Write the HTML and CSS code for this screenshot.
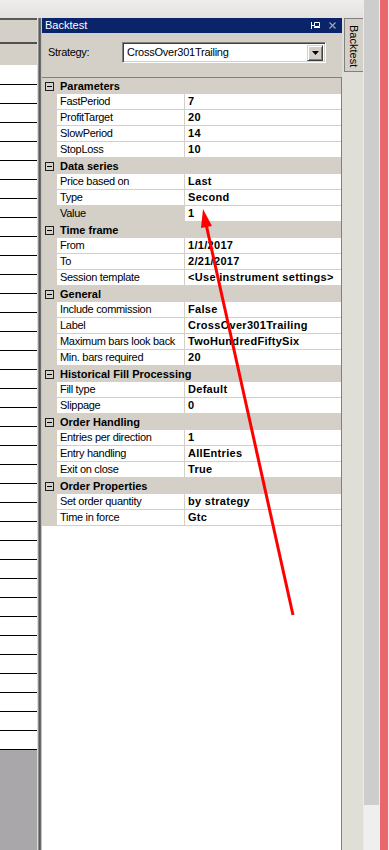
FILE: index.html
```html
<!DOCTYPE html>
<html>
<head>
<meta charset="utf-8">
<title>Backtest</title>
<link rel="stylesheet" href="styles.css">
</head>
<body>
<div class="screen">
  <div class="main">
    <div class="topband"></div>
    <div class="content">
      <div class="left">
        <div class="lhead1"></div>
        <div class="lhead2"></div>
        <div class="lrows">
          <div class="lrow"></div><div class="lrow"></div><div class="lrow"></div><div class="lrow"></div>
          <div class="lrow"></div><div class="lrow"></div><div class="lrow"></div><div class="lrow"></div>
          <div class="lrow"></div><div class="lrow"></div><div class="lrow"></div><div class="lrow"></div>
          <div class="lrow"></div><div class="lrow"></div><div class="lrow"></div><div class="lrow"></div>
          <div class="lrow"></div><div class="lrow"></div><div class="lrow"></div><div class="lrow"></div>
          <div class="lrow"></div><div class="lrow"></div><div class="lrow"></div><div class="lrow"></div>
          <div class="lrow"></div><div class="lrow"></div><div class="lrow"></div><div class="lrow"></div>
          <div class="lrow"></div><div class="lrow"></div><div class="lrow"></div><div class="lrow"></div>
          <div class="lrow"></div><div class="lrow"></div><div class="lrow"></div><div class="lrow"></div>
        </div>
        <div class="lfill"></div>
      </div>
      <div class="splitter"></div>
      <div class="panel">
        <div class="titlebar">
          <span class="title">Backtest</span>
          <svg class="pin" width="9" height="7" viewBox="0 0 9 7"><path d="M0.5 0V7M0 3.5H3M3.5 0.5H8.5V4.5H3.5Z M3 5.5H9" stroke="#fff" stroke-width="1" fill="none"/></svg>
          <svg class="close" width="7" height="7" viewBox="0 0 7 7"><path d="M0.5 0.5L6.5 6.5M6.5 0.5L0.5 6.5" stroke="#9ea4bd" stroke-width="1.2" fill="none"/></svg>
        </div>
        <div class="toolbar">
          <span class="lbl">Strategy:</span>
          <div class="combo">
            <span class="combo-text">CrossOver301Trailing</span>
            <div class="dd"><svg width="7" height="4" viewBox="0 0 7 4"><polygon points="0,0 7,0 3.5,4" fill="#000"/></svg></div>
          </div>
        </div>
        <div class="grid">
          <div class="cat"><div class="gut"><span class="box"></span></div><span class="ctitle">Parameters</span></div>
          <div class="prop"><div class="gut"></div><div class="name">FastPeriod</div><div class="val">7</div></div>
          <div class="prop"><div class="gut"></div><div class="name">ProfitTarget</div><div class="val">20</div></div>
          <div class="prop"><div class="gut"></div><div class="name">SlowPeriod</div><div class="val">14</div></div>
          <div class="prop"><div class="gut"></div><div class="name">StopLoss</div><div class="val">10</div></div>
          <div class="cat"><div class="gut"><span class="box"></span></div><span class="ctitle">Data series</span></div>
          <div class="prop"><div class="gut"></div><div class="name">Price based on</div><div class="val">Last</div></div>
          <div class="prop"><div class="gut"></div><div class="name">Type</div><div class="val">Second</div></div>
          <div class="prop sel"><div class="gut"></div><div class="name">Value</div><div class="val">1</div></div>
          <div class="cat"><div class="gut"><span class="box"></span></div><span class="ctitle">Time frame</span></div>
          <div class="prop"><div class="gut"></div><div class="name">From</div><div class="val">1/1/2017</div></div>
          <div class="prop"><div class="gut"></div><div class="name">To</div><div class="val">2/21/2017</div></div>
          <div class="prop"><div class="gut"></div><div class="name">Session template</div><div class="val">&lt;Use instrument settings&gt;</div></div>
          <div class="cat"><div class="gut"><span class="box"></span></div><span class="ctitle">General</span></div>
          <div class="prop"><div class="gut"></div><div class="name">Include commission</div><div class="val">False</div></div>
          <div class="prop"><div class="gut"></div><div class="name">Label</div><div class="val">CrossOver301Trailing</div></div>
          <div class="prop"><div class="gut"></div><div class="name">Maximum bars look back</div><div class="val">TwoHundredFiftySix</div></div>
          <div class="prop"><div class="gut"></div><div class="name">Min. bars required</div><div class="val">20</div></div>
          <div class="cat"><div class="gut"><span class="box"></span></div><span class="ctitle">Historical Fill Processing</span></div>
          <div class="prop"><div class="gut"></div><div class="name">Fill type</div><div class="val">Default</div></div>
          <div class="prop"><div class="gut"></div><div class="name">Slippage</div><div class="val">0</div></div>
          <div class="cat"><div class="gut"><span class="box"></span></div><span class="ctitle">Order Handling</span></div>
          <div class="prop"><div class="gut"></div><div class="name">Entries per direction</div><div class="val">1</div></div>
          <div class="prop"><div class="gut"></div><div class="name">Entry handling</div><div class="val">AllEntries</div></div>
          <div class="prop"><div class="gut"></div><div class="name">Exit on close</div><div class="val">True</div></div>
          <div class="cat"><div class="gut"><span class="box"></span></div><span class="ctitle">Order Properties</span></div>
          <div class="prop"><div class="gut"></div><div class="name">Set order quantity</div><div class="val">by strategy</div></div>
          <div class="prop"><div class="gut"></div><div class="name">Time in force</div><div class="val">Gtc</div></div>
        </div>
      </div>
      <div class="dock"><div class="tab">Backtest</div></div>
    </div>
  </div>
  <div class="vscroll"><div class="thumb"></div><div class="track"></div></div>
  <div class="redbar"></div>
</div>
<svg class="arrow" width="389" height="850" viewBox="0 0 389 850">
  <line x1="293" y1="615" x2="206" y2="224" stroke="#ff0000" stroke-width="3"/>
  <polygon points="203,209 212,226 201,228" fill="#ff0000"/>
</svg>
</body>
</html>
```

FILE: styles.css
```css
html, body {
  margin: 0;
  padding: 0;
  width: 389px;
  height: 850px;
  overflow: hidden;
  font-family: "Liberation Sans", Arial, sans-serif;
  font-size: 11px;
  color: #000;
}

.screen {
  display: flex;
  width: 389px;
  height: 850px;
}

.main {
  width: 363px;
  display: flex;
  flex-direction: column;
}

.topband {
  height: 18px;
  background: linear-gradient(#efeded, #e4e0e0);
}

.content {
  flex: 1;
  display: flex;
  min-height: 0;
}

/* left panel */
.left {
  width: 37px;
  display: flex;
  flex-direction: column;
  background: #d4d0c8;
}
.lhead1 {
  height: 22px;
  border-top: 2px solid #5a5a5a;
}
.lhead2 {
  height: 21px;
  border-top: 2px solid #505050;
}
.lrows {
  background: #fff;
  padding-top: 1px;
}
.lrow {
  height: 18px;
  border-bottom: 1px solid #000;
}
.lfill {
  flex: 1;
  background: #a9a7a9;
}

.splitter {
  width: 5px;
  background: linear-gradient(to right, #dcdcdc 0, #dcdcdc 1px, #8e8e8e 1px, #8e8e8e 2px, #5a5a5a 2px, #5a5a5a 3px, #6c6c6c 3px, #6c6c6c 4px, #c4c4c4 4px);
}

/* backtest panel */
.panel {
  width: 300px;
  display: flex;
  flex-direction: column;
  background: #fff;
}
.titlebar {
  height: 15px;
  background: #0a246a;
  display: flex;
  align-items: center;
  padding-left: 3px;
}
.title {
  color: #fff;
  font-size: 11px;
  line-height: 15px;
}
.pin {
  margin-left: auto;
  margin-right: 9px;
  display: block;
}
.close {
  margin-right: 6px;
  display: block;
}

.toolbar {
  height: 44px;
  background: #d4d0c8;
  display: flex;
  align-items: flex-start;
  padding-top: 9px;
  box-sizing: border-box;
}
.lbl {
  width: 80px;
  padding-left: 6px;
  box-sizing: border-box;
  line-height: 21px;
  letter-spacing: -0.3px;
}
.combo {
  width: 204px;
  height: 21px;
  box-sizing: border-box;
  background: #fff;
  border: 1px solid;
  border-color: #808080 #fff #fff #808080;
  box-shadow: inset 1px 1px #404040, inset -1px -1px #d4d0c8;
  display: flex;
  align-items: center;
  padding: 0 2px 0 4px;
}
.combo-text {
  line-height: 19px;
  letter-spacing: -0.25px;
}
.dd {
  margin-left: auto;
  width: 16px;
  height: 16px;
  box-sizing: border-box;
  background: #d4d0c8;
  border: 1px solid;
  border-color: #d4d0c8 #404040 #404040 #d4d0c8;
  box-shadow: inset 1px 1px #fff, inset -1px -1px #808080;
  display: flex;
  align-items: center;
  justify-content: center;
}
.dd svg {
  display: block;
}

/* property grid */
.grid {
  flex: 1;
  background: #fff;
  border-top: 1px solid #808080;
  border-right: 1px solid #808080;
}
.cat {
  height: 16px;
  display: flex;
  align-items: center;
  background: #d4d0c8;
}
.gut {
  width: 15px;
  height: 16px;
  flex: none;
  background: #d4d0c8;
  display: flex;
  align-items: center;
  padding-left: 3px;
  box-sizing: border-box;
}
.box {
  width: 9px;
  height: 9px;
  box-sizing: border-box;
  border: 1px solid #202020;
  display: flex;
  align-items: center;
  justify-content: center;
}
.box::before {
  content: "";
  width: 5px;
  height: 1px;
  background: #000;
}
.ctitle {
  font-weight: bold;
  padding-left: 3px;
  white-space: nowrap;
  line-height: 16px;
}
.prop {
  height: 16px;
  display: flex;
}
.name {
  width: 127px;
  flex: none;
  height: 16px;
  box-sizing: border-box;
  border-bottom: 1px solid #d4d0c8;
  padding-left: 3px;
  line-height: 15px;
  white-space: nowrap;
  overflow: hidden;
  letter-spacing: -0.3px;
}
.val {
  flex: 1;
  height: 16px;
  box-sizing: border-box;
  border-left: 1px solid #d4d0c8;
  border-bottom: 1px solid #d4d0c8;
  padding-left: 3px;
  line-height: 15px;
  font-weight: bold;
  white-space: nowrap;
  overflow: hidden;
  letter-spacing: 0.3px;
}
.sel .name {
  background: #d4d0c8;
}

/* dock strip */
.dock {
  width: 21px;
  background: #dfdfd8;
}
.tab {
  margin-left: 2px;
  width: 19px;
  height: 54px;
  box-sizing: border-box;
  background: #d4d0c8;
  border: 1px solid #808080;
  border-right: none;
  writing-mode: vertical-rl;
  padding-top: 6px;
  display: flex;
  align-items: center;
  font-size: 11px;
}

/* scroll column */
.vscroll {
  width: 15px;
  border-left: 1px solid #ebebeb;
  border-right: 1px solid #f2f2f2;
  display: flex;
  flex-direction: column;
}
.thumb {
  height: 805px;
  background: #cdcdcd;
}
.track {
  flex: 1;
  background: #efefef;
}
.redbar {
  width: 8px;
  background: #e8686e;
  border-right: 1px solid #f0e8e8;
}

.arrow {
  position: absolute;
  left: 0;
  top: 0;
  pointer-events: none;
}
```
